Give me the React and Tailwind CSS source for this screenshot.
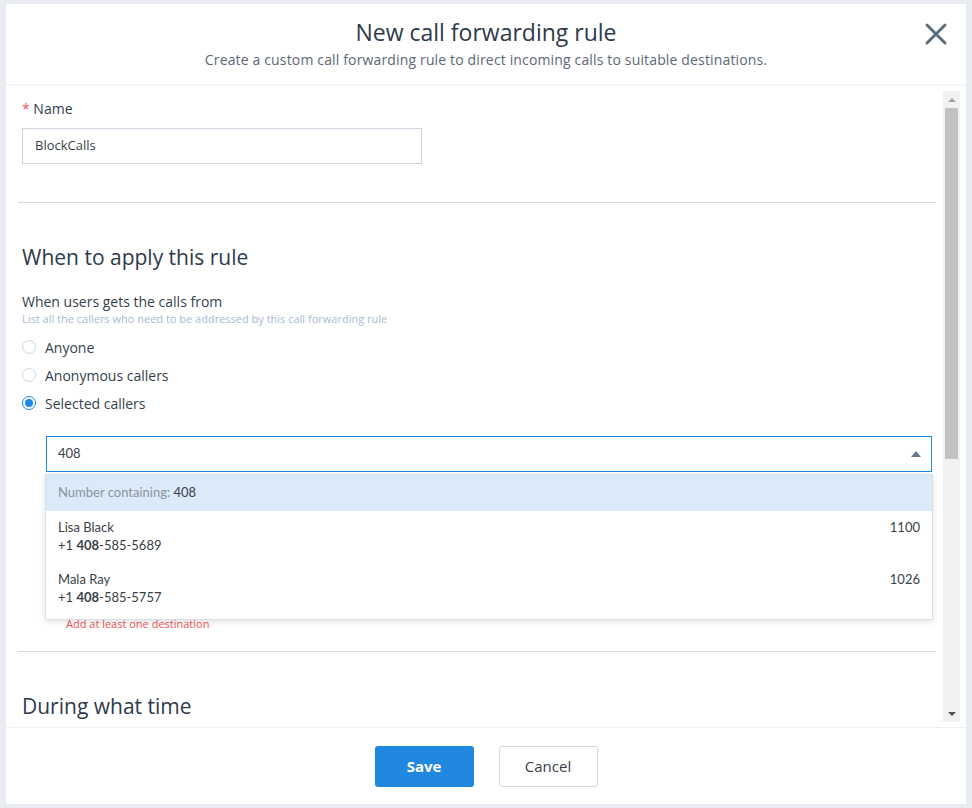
import React from 'react';

const font = { fontFamily: '"Open Sans", Lato, sans-serif' };
const narrow = { fontFamily: 'Lato, "Noto Sans", sans-serif' };

function Radio({ checked, label }) {
  return (
    <label className="flex h-[28px] items-center gap-[9px] text-[14px] text-[#343f4d]">
      <span
        className={
          'flex h-[14px] w-[14px] items-center justify-center rounded-full border bg-white ' +
          (checked ? 'border-[#1e88e5]' : 'border-[#cdd6e2]')
        }
      >
        {checked && <span className="h-[8px] w-[8px] rounded-full bg-[#1e88e5]" />}
      </span>
      {label}
    </label>
  );
}

function Option({ name, pre, rest, ext }) {
  return (
    <div className="flex h-[52px] items-start justify-between px-3 pt-[7px] text-[13px] text-[#3a3f47]">
      <div className="leading-[18px]">
        <div>{name}</div>
        <div>
          +1 <span className="font-bold">{pre}</span>
          {rest}
        </div>
      </div>
      <div className="leading-[18px]">{ext}</div>
    </div>
  );
}

function Scrollbar() {
  return (
    <div className="mt-[6px] mb-[5px] mr-[6px] flex w-[17px] flex-col bg-[#f1f1f1]">
      <div className="flex h-[17px] items-center justify-center">
        <span className="h-0 w-0 border-x-[4px] border-b-[4px] border-x-transparent border-b-[#a3a3a3]" />
      </div>
      <div className="mx-[2px] h-[351px] bg-[#c1c1c1]" />
      <div className="flex-1" />
      <div className="flex h-[17px] items-center justify-center">
        <span className="h-0 w-0 border-x-[4px] border-t-[4px] border-x-transparent border-t-[#505050]" />
      </div>
    </div>
  );
}

export default function App() {
  return (
    <div className="h-[808px] w-[972px] overflow-hidden bg-[#e8ebf0] pt-[4px] pl-[6px]" style={font}>
      <div className="flex h-[800px] w-[960px] flex-col bg-white">
        <header className="relative flex h-[81px] shrink-0 flex-col items-center border-b border-[#eef1f5] pt-[14px] shadow-[0_1px_2px_rgba(0,0,0,0.03)]">
          <h1 className="text-[23px] leading-[28px] text-[#2e3a4b]">New call forwarding rule</h1>
          <p className="mt-[4px] text-[14px] leading-[20px] tracking-[0.15px] text-[#5d6877]">
            Create a custom call forwarding rule to direct incoming calls to suitable destinations.
          </p>
          <button className="absolute top-[18px] right-[18px] text-[#5d6b7a]">
            <svg width="24" height="24" viewBox="0 0 24 24" fill="none" stroke="currentColor" strokeWidth="3" strokeLinecap="round">
              <path d="M3 3 L21 21 M21 3 L3 21" />
            </svg>
          </button>
        </header>

        <div className="flex h-[642px] shrink-0 overflow-hidden">
          <div className="relative flex-1 pl-[12px] pr-[7px]">
            <div className="pl-[4px] pt-[14px]">
              <div className="text-[14px] leading-[20px] text-[#343f4d]">
                <span className="text-[#f05454]">* </span>Name
              </div>
              <div className="mt-[9px] flex h-[36px] w-[400px] items-center border border-[#ccd4e0] px-[12px] text-[13px] text-[#3a3f47]">
                BlockCalls
              </div>
            </div>

            <div className="mt-[38px] border-t border-[#d6dbe4]" />

            <div className="pl-[4px]">
              <h2 className="mt-[40px] text-[21px] leading-[28px] text-[#2e3a4b]">When to apply this rule</h2>
              <div className="mt-[21px] text-[14px] leading-[20px] text-[#343f4d]">When users gets the calls from</div>
              <div className="text-[11px] leading-[14px] text-[#a9b9d8]">
                List all the callers who need to be addressed by this call forwarding rule
              </div>
              <div className="mt-[7px] flex flex-col">
                <Radio label="Anyone" />
                <Radio label="Anonymous callers" />
                <Radio checked label="Selected callers" />
              </div>

              <div className="relative ml-[24px] mt-[19px] mr-[4px]">
                <div className="flex h-[36px] items-center justify-between border border-[#1e88e5] pl-[11px] pr-[10px] text-[13px] text-[#3a3f47]" style={narrow}>
                  <span>408</span>
                  <span className="h-0 w-0 border-x-[5px] border-b-[6px] border-x-transparent border-b-[#6b7886]" />
                </div>
                <div className="absolute top-[38px] -left-[1px] -right-[1px] z-10 border border-[#dcdfe4] bg-white pb-[4px] shadow-[0_2px_6px_rgba(0,0,0,0.12)]" style={narrow}>
                  <div className="flex h-[36px] items-center bg-[#dbeaf8] px-3 text-[13px] text-[#8a939e]">
                    Number containing:&nbsp;<span className="text-[#3a3f47]">408</span>
                  </div>
                  <Option name="Lisa Black" pre="408" rest="-585-5689" ext="1100" />
                  <Option name="Mala Ray" pre="408" rest="-585-5757" ext="1026" />
                </div>
                <div className="ml-[20px] mt-[145px] text-[11px] leading-[14px] text-[#f05454]">Add at least one destination</div>
              </div>
            </div>

            <div className="mt-[20px] border-t border-[#d6dbe4]" />

            <h2 className="mt-[40px] pl-[4px] text-[21px] leading-[28px] text-[#2e3a4b]">During what time</h2>
          </div>
          <Scrollbar />
        </div>

        <footer className="flex flex-1 items-start justify-center gap-[25px] border-t border-[#eef1f5] pt-[18px]">
          <button className="h-[41px] w-[99px] rounded-[3px] bg-[#2188e0] text-[15px] font-bold text-white">Save</button>
          <button className="h-[41px] w-[99px] rounded-[3px] border border-[#cfd8e3] bg-white text-[15px] text-[#3a3f47]">
            Cancel
          </button>
        </footer>
      </div>
    </div>
  );
}
